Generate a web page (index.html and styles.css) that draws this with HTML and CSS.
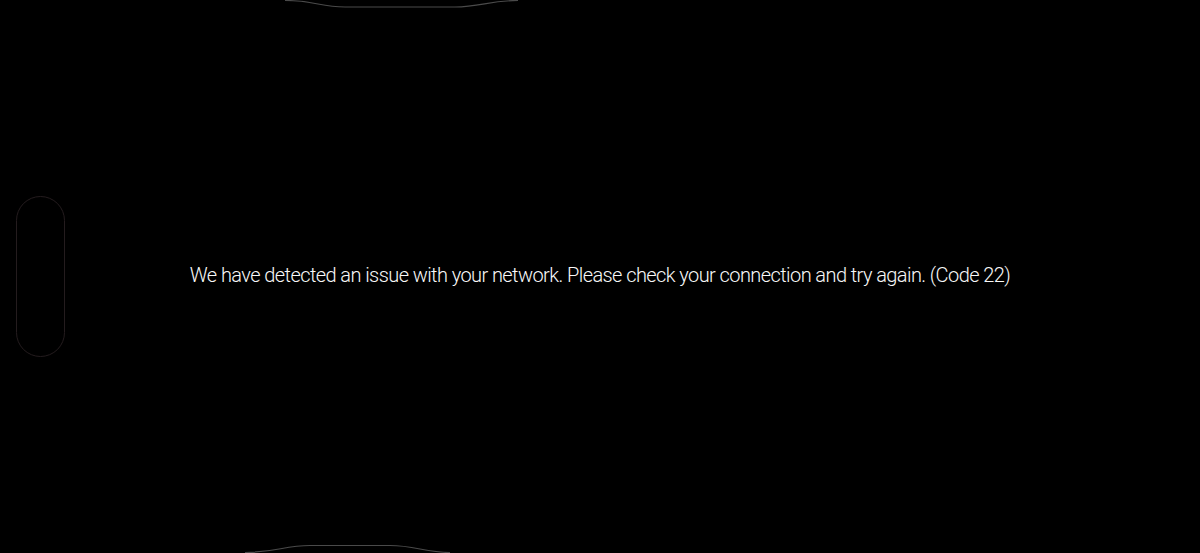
FILE: index.html
```html
<!DOCTYPE html>
<html lang="en">
<head>
<meta charset="utf-8">
<title>Network issue</title>
<link rel="stylesheet" href="styles.css">
</head>
<body>
<div class="screen">
  <svg class="edge edge-top" width="1200" height="12" viewBox="0 0 1200 12">
    <path d="M285 0.5 C315 0.5 320 7 345 7 L455 7 C480 7 490 0.5 518 0.5" fill="none" stroke="#4a4a4a" stroke-width="1.2"/>
  </svg>
  <div class="capsule"></div>
  <p class="message">We have detected an issue with your network. Please check your connection and try again. (Code 22)</p>
  <svg class="edge edge-bottom" width="1200" height="12" viewBox="0 0 1200 12">
    <path d="M245 11.5 C275 11.5 285 4.5 310 4.5 L390 4.5 C415 4.5 425 11.5 450 11.5" fill="none" stroke="#4a4a4a" stroke-width="1.2"/>
  </svg>
</div>
</body>
</html>
```
FILE: styles.css
```css
html, body {
  margin: 0;
  padding: 0;
  background: #000;
}
.screen {
  position: relative;
  width: 1200px;
  height: 553px;
  background: #000;
  display: flex;
  align-items: center;
  justify-content: center;
  overflow: hidden;
}
.message {
  margin: 0 0 3px 0;
  font-family: Roboto, "Liberation Sans", sans-serif;
  font-weight: 300;
  font-size: 20px;
  letter-spacing: -0.58px;
  color: #f8f8f8;
  white-space: nowrap;
}
.capsule {
  position: absolute;
  left: 16px;
  top: 196px;
  width: 47px;
  height: 159px;
  border: 1px solid #241c1e;
  border-radius: 25px;
}
.edge {
  position: absolute;
  left: 0;
}
.edge-top { top: 0; }
.edge-bottom { bottom: 0; }
```
